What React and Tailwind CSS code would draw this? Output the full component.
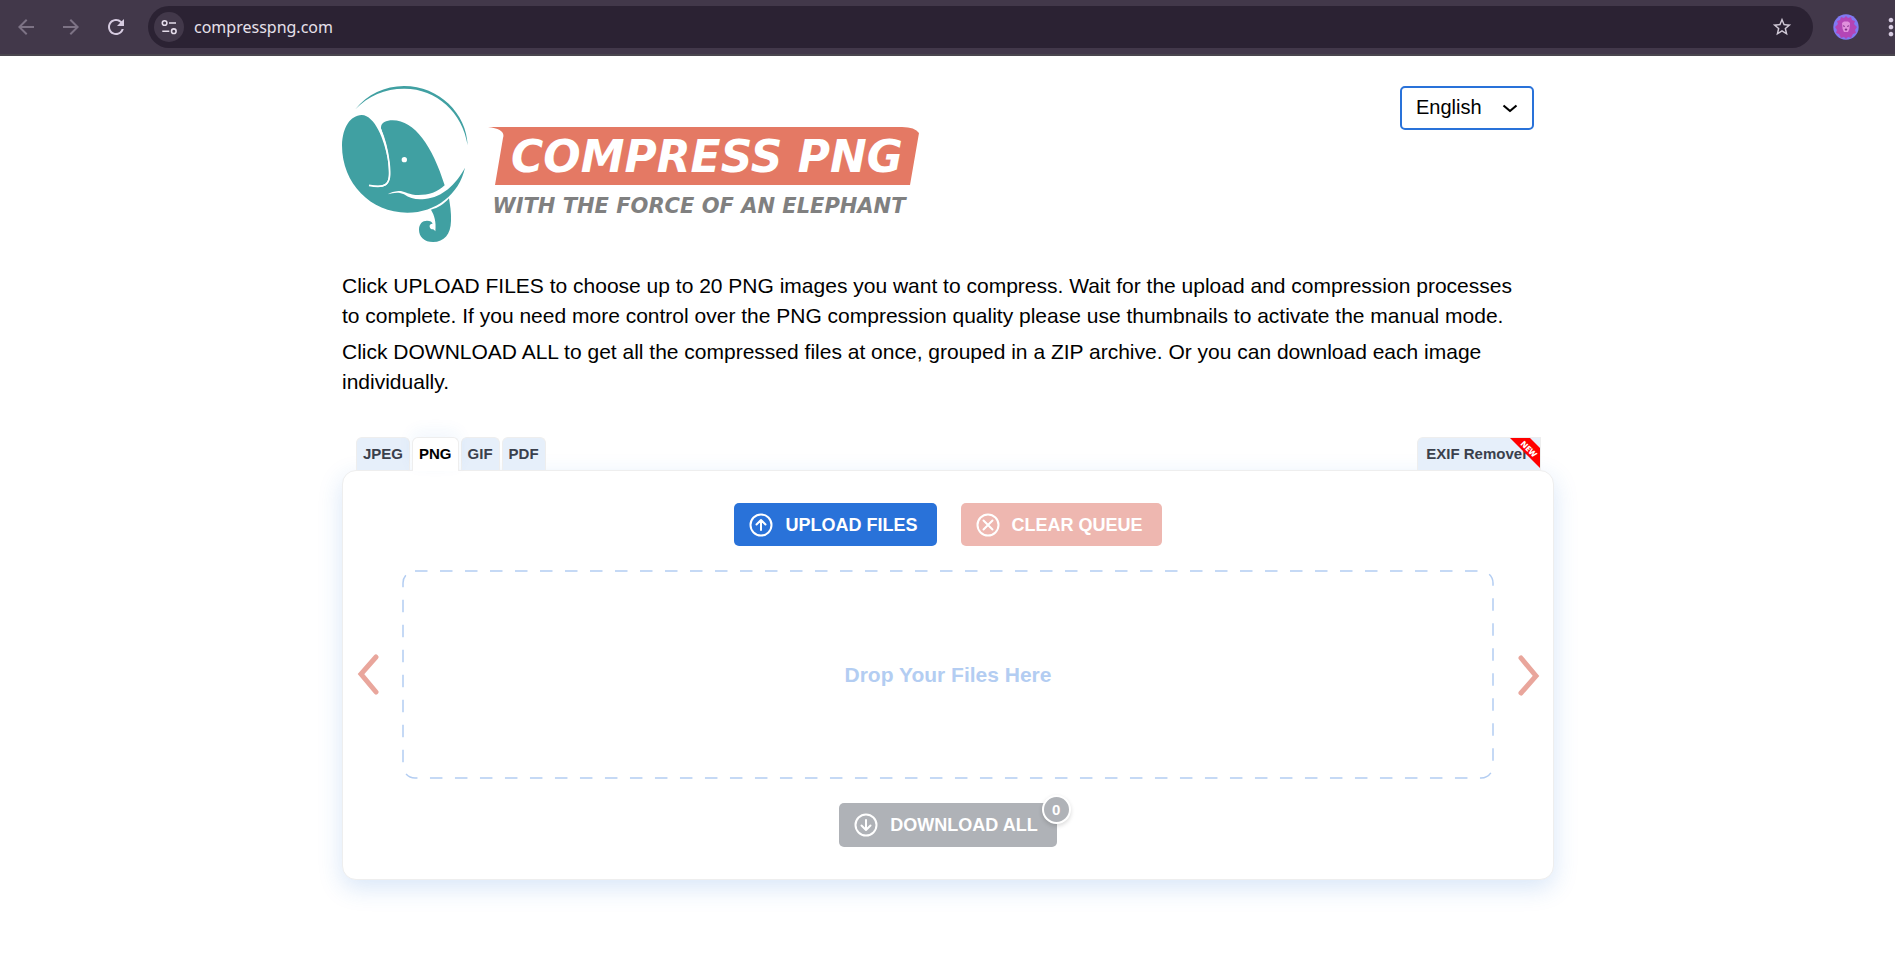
import {
  MdArrowBack,
  MdArrowForward,
  MdRefresh,
  MdStarBorder,
  MdMoreVert,
} from "react-icons/md";

const TABS = ["JPEG", "PNG", "GIF", "PDF"];

function BrowserBar() {
  return (
    <div className="flex h-14 items-center overflow-hidden border-b-2 border-[#4a464e] bg-[#42384a] pl-3.5">
      <div className="flex items-center gap-[21px]">
        <button type="button" aria-label="Back" className="text-[#7d7385]">
          <MdArrowBack className="h-6 w-6" />
        </button>
        <button type="button" aria-label="Forward" className="text-[#7d7385]">
          <MdArrowForward className="h-6 w-6" />
        </button>
        <button type="button" aria-label="Reload" className="text-[#d6cbe0]">
          <MdRefresh className="h-6 w-6" />
        </button>
      </div>

      <div className="ml-5 flex h-[42px] flex-1 items-center rounded-full bg-[#2b2233] pr-5 pl-1.5">
        <button
          type="button"
          aria-label="View site information"
          className="flex h-[30px] w-[30px] items-center justify-center rounded-full bg-[#42384a]"
        >
          <svg viewBox="0 0 16 16" className="h-4 w-4" fill="none" stroke="#e4dcea" strokeWidth="1.6">
            <circle cx="3.6" cy="4" r="2.3" />
            <path d="M8 4h7M1.3 12.2h7" />
            <circle cx="12.8" cy="12.2" r="2.3" />
          </svg>
        </button>
        <input
          aria-label="Address"
          defaultValue="compresspng.com"
          className="ml-2.5 min-w-0 flex-1 bg-transparent font-['Noto_Sans',sans-serif] text-base text-[#e6e0ea] outline-none"
        />
        <button type="button" aria-label="Bookmark this page" className="text-[#d0c9d6]">
          <MdStarBorder className="h-[22px] w-[22px]" />
        </button>
      </div>

      <button type="button" aria-label="Profile" className="ml-5">
        <svg viewBox="0 0 26 26" className="h-[26px] w-[26px]">
          <circle cx="13" cy="13" r="12.7" fill="#8179f2" />
          <path
            d="M13 2l2 2 3-1 1 3 3 1-1 3 3 3-2 3 1 3-3 1-2 4-3-1-2 2-2-2-3 1-2-4-3-1 1-3-2-3 3-3-1-3 3-1 1-3 3 1z"
            fill="#b445b6"
          />
          <path d="M9 9l2-1.500h4L17 9l-.6 6L15 18h-4l-1.400-3z" fill="#e08fdc" />
          <path d="M10 11.800l1.800.6M16 11.800l-1.800.6M12 15.200h2L13 16.400z" stroke="#7b2a86" fill="#7b2a86" />
        </svg>
      </button>
      <button type="button" aria-label="Menu" className="-mr-2.5 ml-[18px] text-[#d6cbe0]">
        <MdMoreVert className="h-7 w-7" />
      </button>
    </div>
  );
}

function Logo() {
  return (
    <svg viewBox="0 0 580 160" className="h-40 w-[580px]" role="img" aria-label="Compress PNG">
      <g transform="translate(-12 -9) scale(.33333)" fill="#40a0a2">
        <path d="M76 103C112 58 165 33 222 33C328 33 410 116 413 211C398 112 318 40 222 41C165 41 114 63 76 103z" />
        <path d="M95 120C135 121 163 196 173 250C178 290 180 316 166 326C154 334 135 332 117 331C135 337 158 339 170 329C186 315 180 277 175 240C170 205 158 180 153 160C152 142 168 136 188 136C254 136 308 215 344 331C322 353 290 362 256 360C228 356 222 347 205 348C192 349 183 352 173 358C190 353 208 350 222 358C240 371 260 375 285 372C338 366 376 330 405 278C388 357 318 413 232 413C122 413 36 325 36 211C38 155 61 122 95 120z" />
        <path
          d="M150 160C166 196 172 225 177 262C181 300 180 321 166 329C154 337 137 335 117 331"
          fill="none"
          stroke="#fff"
          strokeWidth="5"
        />
        <path d="M303 404C325 399 341 388 357 370C360 390 364 412 363 438C362 478 343 501 309 501C283 501 267 485 267 464C267 447 277 437 291 437C301 437 306 441 308 446C297 445 296 458 305 463C311 461 314 465 316 469C319 439 313 421 303 404z" />
        <circle cx="223" cy="254" r="8" fill="#fff" />
      </g>
      <path d="M146 43H560Q573 43 577 49L568 101H153L161 54Q164 45 146 43z" fill="#e47964" />
      <g
        fontFamily="'DejaVu Sans', sans-serif"
        fontWeight="700"
        fontStyle="italic"
        textAnchor="middle"
      >
        <text x="365" y="88" fontSize="44" fill="#fff">
          COMPRESS PNG
        </text>
        <text x="357" y="129" fontSize="21" fill="#808080">
          WITH THE FORCE OF AN ELEPHANT
        </text>
      </g>
    </svg>
  );
}

function CircleIcon({ d }) {
  return (
    <svg viewBox="0 0 24 24" className="h-6 w-6" fill="none" stroke="currentColor" strokeWidth="2">
      <circle cx="12" cy="12" r="10.500" />
      <path d={d} strokeLinecap="round" strokeLinejoin="round" />
    </svg>
  );
}

function ActionButton({ icon, className, children, ...props }) {
  return (
    <button
      type="button"
      className={`relative flex items-center gap-3 rounded-[5px] pr-[19px] pl-[15px] text-lg font-bold text-white ${className}`}
      {...props}
    >
      <CircleIcon d={icon} />
      {children}
    </button>
  );
}

function Chevron({ d, label, className }) {
  return (
    <button
      type="button"
      aria-label={label}
      className={`flex w-[59px] items-center justify-center ${className}`}
    >
      <svg
        viewBox="0 0 22 42"
        className="h-[42px] w-[22px]"
        fill="none"
        stroke="#e9a69c"
        strokeWidth="5"
        strokeLinecap="round"
      >
        <path d={d} />
      </svg>
    </button>
  );
}

function Uploader() {
  return (
    <section>
      <nav className="flex items-end gap-0.5 pr-[13px] pl-3.5 text-[15px] font-bold text-[#3a404c]">
        {TABS.map((tab) => (
          <a
            key={tab}
            href="#"
            className={
              tab === "PNG"
                ? "relative z-10 -mb-px flex h-[34px] items-center rounded-t-md border border-b-0 border-[#eee] bg-white px-1.5 text-black shadow-[0_-6px_16px_rgba(41,114,217,0.06)]"
                : "flex h-[33px] items-center rounded-t-md border border-b-0 border-[#eee] bg-[#e6effa] px-1.5"
            }
          >
            {tab}
          </a>
        ))}
        <a
          href="#"
          className="relative ml-auto flex h-[33px] items-center overflow-hidden rounded-tl-md border border-b-0 border-[#eee] bg-[#e6effa] pr-3 pl-2"
        >
          EXIF Remover
          <svg viewBox="0 0 32 32" className="absolute -top-px -right-px h-8 w-8">
            <path d="M0 0h20l12 12v20z" fill="#f00" />
            <text
              x="0"
              y="3"
              transform="translate(20 12) rotate(45)"
              textAnchor="middle"
              fontFamily="'Open Sans', sans-serif"
              fontSize="8"
              fontWeight="800"
              fill="#fff"
            >
              NEW
            </text>
          </svg>
        </a>
      </nav>

      <div className="flex flex-col items-center gap-6 rounded-[14px] border border-[#eee] bg-white py-8 shadow-[0_8px_24px_rgba(41,114,217,0.18)]">
        <div className="flex gap-6">
          <ActionButton icon="M12 17V7.500M7.500 11.500L12 7l4.500 4.500" className="h-[43px] bg-[#2972d9]">
            UPLOAD FILES
          </ActionButton>
          <ActionButton icon="M7.500 7.500l9 9M16.500 7.500l-9 9" className="h-[43px] bg-[#eeb7b0]">
            CLEAR QUEUE
          </ActionButton>
        </div>

        <div className="flex h-[209px] w-full">
          <Chevron label="Scroll left" className="pr-2.5" d="M19 3L4 20L19 38" />
          <div className="relative flex flex-1 items-center justify-center">
            <svg className="absolute inset-0 h-full w-full">
              <rect
                x="1"
                y="1"
                rx="12"
                className="h-[calc(100%-2px)] w-[calc(100%-2px)]"
                fill="none"
                stroke="#b3cdf2"
                strokeWidth="1.500"
                strokeDasharray="12.500 12.500"
              />
            </svg>
            <p className="text-[21px] font-bold text-[#b3cdf2]">Drop Your Files Here</p>
          </div>
          <Chevron label="Scroll right" className="pl-2.5" d="M3 4L18 22L3 39" />
        </div>

        <ActionButton icon="M12 7v9.500M7.500 12.500L12 17l4.500-4.500" className="h-11 bg-[#afb2b7]">
          DOWNLOAD ALL
          <span className="absolute -top-2 -right-3.5 flex h-[29px] w-[29px] items-center justify-center rounded-full border-2 border-white bg-[#afb2b7] text-[15px] shadow-[0_2px_4px_rgba(0,0,0,0.15)]">
            0
          </span>
        </ActionButton>
      </div>
    </section>
  );
}

export default function App() {
  return (
    <div className="min-h-screen bg-white font-['Liberation_Sans',Arial,sans-serif] text-black">
      <BrowserBar />
      <main className="mx-auto max-w-[1213px] pt-7 pl-px">
        <header className="flex items-start justify-between pr-5">
          <Logo />
          <div className="relative mt-0.5">
            <select
              aria-label="Language"
              className="h-11 w-[134px] appearance-none rounded-[5px] border-2 border-[#2972d9] bg-white px-3.5 pb-0.5 text-xl"
            >
              <option>English</option>
            </select>
            <svg
              viewBox="0 0 16 9"
              className="pointer-events-none absolute top-[18px] right-4 h-[9px] w-4"
              fill="none"
              stroke="#000"
              strokeWidth="2.200"
            >
              <path d="M1.500 1.500L8 7l6.500-5.500" strokeLinejoin="round" />
            </svg>
          </div>
        </header>

        <div className="mt-[27px] mb-10 space-y-1.5 pr-5 text-[21px] leading-[30px]">
          <p>
            Click UPLOAD FILES to choose up to 20 PNG images you want to compress. Wait for the
            upload and compression processes to complete. If you need more control over the PNG
            compression quality please use thumbnails to activate the manual mode.
          </p>
          <p>
            Click DOWNLOAD ALL to get all the compressed files at once, grouped in a ZIP archive. Or
            you can download each image individually.
          </p>
        </div>

        <Uploader />
      </main>
    </div>
  );
}
